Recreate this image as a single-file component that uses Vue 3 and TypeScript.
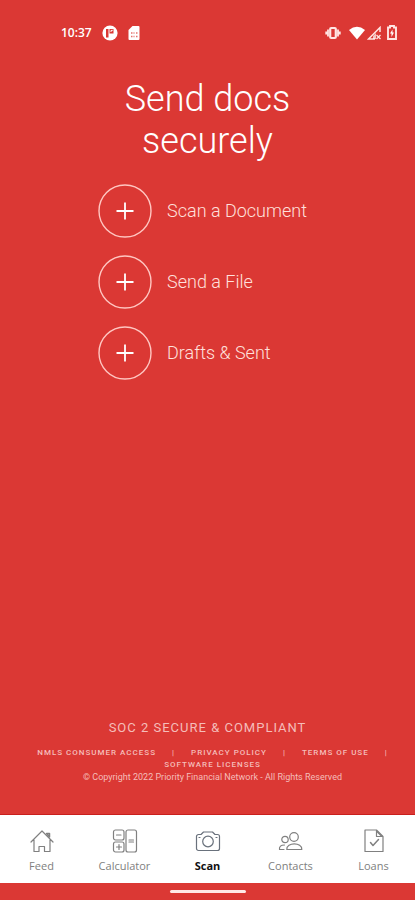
<script setup lang="ts">
interface Tab {
  id: string
  label: string
}

const actions: string[] = ['Scan a Document', 'Send a File', 'Drafts & Sent']
const links: string[] = ['NMLS CONSUMER ACCESS', 'PRIVACY POLICY', 'TERMS OF USE', 'SOFTWARE LICENSES']
const tabs: Tab[] = [
  { id: 'feed', label: 'Feed' },
  { id: 'calculator', label: 'Calculator' },
  { id: 'scan', label: 'Scan' },
  { id: 'contacts', label: 'Contacts' },
  { id: 'loans', label: 'Loans' },
]
const active = 'scan'
</script>

<template>
  <div class="screen">
    <header class="status">
      <div class="status-group">
        <span class="clock">10:37</span>
        <svg width="16" height="16" viewBox="0 0 16 16" aria-hidden="true">
          <circle cx="8" cy="8" r="7.600" fill="#fff" />
          <path d="M4 4h2.500v8.500H4zM7.500 4h4v4.500h-4z" fill="#db3834" />
          <path d="M8.500 6.500l2-1.500" stroke="#fff" stroke-width="1.200" />
        </svg>
        <svg width="12" height="16" viewBox="0 0 12 16" aria-hidden="true">
          <path d="M4.500 1H10.500a1 1 0 0 1 1 1V14a1 1 0 0 1-1 1H1.500a1 1 0 0 1-1-1V5z" fill="#fff" />
          <path d="M3 8h1.500M5.500 8h1M8 8h1.500M3 11.500h1.500M5.500 11.500h1M8 11.500h1.500" stroke="#e4706c" stroke-width="1.500" />
        </svg>
      </div>
      <div class="status-group right">
        <svg width="16" height="14" viewBox="0 0 16 14" aria-hidden="true">
          <path d="M1.200 5.500v3M3 3.500v7M13 3.500v7M14.800 5.500v3" stroke="#ffe5e3" stroke-width="1.800" />
          <rect x="5.200" y="2" width="5.600" height="10" rx="1" fill="none" stroke="#ffe5e3" stroke-width="2.200" />
        </svg>
        <svg class="wifi" width="16" height="14" viewBox="0 0 16 14" aria-hidden="true">
          <path d="M0 4Q8-2.500 16 4L8 13.500z" fill="#fff" />
        </svg>
        <svg width="14" height="14" viewBox="0 0 14 14" aria-hidden="true">
          <path d="M13 6V1.500L1.500 13H8" fill="none" stroke="#ffe5e3" stroke-width="1.500" />
          <path d="M6 10l3-3v6H6z" fill="#fff" opacity=".7" />
          <path d="M9.500 9l4 4M13.500 9l-4 4" stroke="#ffe5e3" stroke-width="1.300" />
        </svg>
        <svg class="battery" width="10" height="15" viewBox="0 0 10 15" aria-hidden="true">
          <path d="M3 1h4v1.500h2V14H1V2.500h2z" fill="none" stroke="#ffe5e3" stroke-width="1.900" />
          <path d="M5.500 4.500L3 8.500h1.500V12L7 7.500H5.500z" fill="#fff" />
        </svg>
      </div>
    </header>

    <main class="main">
      <h1 class="title">Send docs<br />securely</h1>
      <div class="actions">
        <button v-for="action in actions" :key="action" class="action" type="button">
          <svg width="54" height="54" viewBox="0 0 54 54" aria-hidden="true">
            <circle cx="27" cy="27" r="26" fill="none" stroke="#ffc6c1" stroke-width="1.400" />
            <path d="M18.500 27h17M27 18.500v17" stroke="#fff" stroke-width="1.800" />
          </svg>
          <span>{{ action }}</span>
        </button>
      </div>
    </main>

    <footer class="legal">
      <p class="soc">SOC 2 SECURE &amp; COMPLIANT</p>
      <div class="fine-print">
        <div class="links">
          <span v-for="(link, i) in links" :key="link" class="link">
            <a href="#">{{ link }}</a>
            <span v-if="i < links.length - 1">|</span>
          </span>
        </div>
        <p class="copyright">© Copyright 2022 Priority Financial Network - All Rights Reserved</p>
      </div>
    </footer>

    <nav class="tabs">
      <a v-for="tab in tabs" :key="tab.id" href="#" class="tab" :class="{ active: tab.id === active }">
        <svg width="26" height="26" viewBox="0 0 26 26" fill="none" stroke="currentColor" stroke-width="1.200" stroke-linejoin="round" stroke-linecap="round" aria-hidden="true">
          <template v-if="tab.id === 'feed'">
            <path d="M2 14L13 3l11 11M5 12v11.500h5V18.500h5.500v5H21V12" />
            <path d="M17.500 5.500h3v3.500z" stroke-width="1.500" />
          </template>
          <template v-else-if="tab.id === 'calculator'">
            <rect x="1.500" y="2" width="10.500" height="10" rx="2" />
            <rect x="1.500" y="14" width="10.500" height="10" rx="2" />
            <rect x="14" y="2" width="10.500" height="22" rx="2" />
            <path d="M4.500 7h4.500M4.500 19h5M7 16.500v5M17 12h4.500M17 14h4.500" />
          </template>
          <template v-else-if="tab.id === 'scan'">
            <path d="M3.500 6.500H6L8.500 4h9L20 6.500h2.500a2 2 0 0 1 2 2V20.500a2 2 0 0 1-2 2h-19a2 2 0 0 1-2-2V8.500a2 2 0 0 1 2-2z" />
            <circle cx="13" cy="13.500" r="5.300" />
            <path d="M4 9.500h1M21 9.500h1" />
          </template>
          <template v-else-if="tab.id === 'contacts'">
            <circle cx="16" cy="9" r="4.300" />
            <circle cx="7" cy="11.500" r="3.200" />
            <path d="M8.800 21.500c-.5-7.500 15.500-7.500 15 0zM6 21.500H1.500c-.5-3 1.500-4.500 5-4.500" />
          </template>
          <template v-else>
            <path d="M4 2h11.500L22 8.500v15H4zM15.500 2v6.500H22" />
            <path d="M16 3.500l4.500 4.500M9.500 14.500l2.500 3 5.500-6" stroke-width="1.500" />
          </template>
        </svg>
        <span>{{ tab.label }}</span>
      </a>
    </nav>
    <div class="gesture"><span class="handle"></span></div>
  </div>
</template>

<style>
body {
  margin: 0;
  background: #db3834;
}
</style>

<style scoped>
.screen {
  display: flex;
  flex-direction: column;
  min-height: 100vh;
  background: #db3834;
  color: #fff;
  font-family: Roboto, "Liberation Sans", sans-serif;
}
.status {
  display: flex;
  justify-content: space-between;
  align-items: center;
  padding: 24px 18px 0 61px;
  height: 17px;
}
.status-group {
  display: flex;
  align-items: center;
  gap: 10px;
}
.status-group.right {
  gap: 2px;
}
.wifi {
  margin-left: 6px;
}
.battery {
  margin-left: 4px;
}
.clock {
  font: 600 12px/17px "Open Sans", sans-serif;
}
.main {
  flex: 1;
  display: flex;
  flex-direction: column;
  align-items: center;
  padding-top: 37px;
}
.title {
  margin: 0;
  font-size: 36px;
  line-height: 42px;
  font-weight: 300;
  text-align: center;
}
.actions {
  display: flex;
  flex-direction: column;
  gap: 17px;
  margin-top: 22px;
  padding-right: 10px;
}
.action {
  display: flex;
  align-items: center;
  gap: 15px;
  padding: 0;
  border: 0;
  background: none;
  color: #ffe0dd;
  font: 300 18px/24px Roboto, sans-serif;
  cursor: pointer;
}
.legal {
  text-align: center;
  color: #f5bdba;
}
.soc {
  margin: 0 0 11px;
  font-size: 13px;
  line-height: 16px;
  letter-spacing: 1px;
}
.fine-print {
  padding-left: 10px;
}
.links {
  display: flex;
  flex-wrap: wrap;
  justify-content: center;
  column-gap: 16px;
  font-size: 8px;
  font-weight: 500;
  line-height: 12px;
  letter-spacing: 1px;
}
.link {
  display: flex;
  gap: 16px;
}
.links a {
  color: inherit;
  text-decoration: none;
}
.copyright {
  margin: 0;
  font-size: 9px;
  line-height: 13px;
}
.tabs {
  display: flex;
  margin-top: 30px;
  height: 69px;
  background: #fff;
  border-top: 1px solid #c91f1d;
  box-sizing: border-box;
}
.tab {
  flex: 1;
  display: flex;
  flex-direction: column;
  align-items: center;
  gap: 3px;
  padding-top: 13px;
  color: #808080;
  text-decoration: none;
  font: 400 11px/18px "Open Sans", sans-serif;
}
.tab.active {
  color: #111;
  font-weight: 700;
}
.tab.active svg {
  color: #69717c;
}
.gesture {
  display: flex;
  justify-content: center;
  align-items: center;
  height: 17px;
}
.handle {
  width: 76px;
  height: 3px;
  border-radius: 2px;
  background: #ffe9e7;
}
</style>
